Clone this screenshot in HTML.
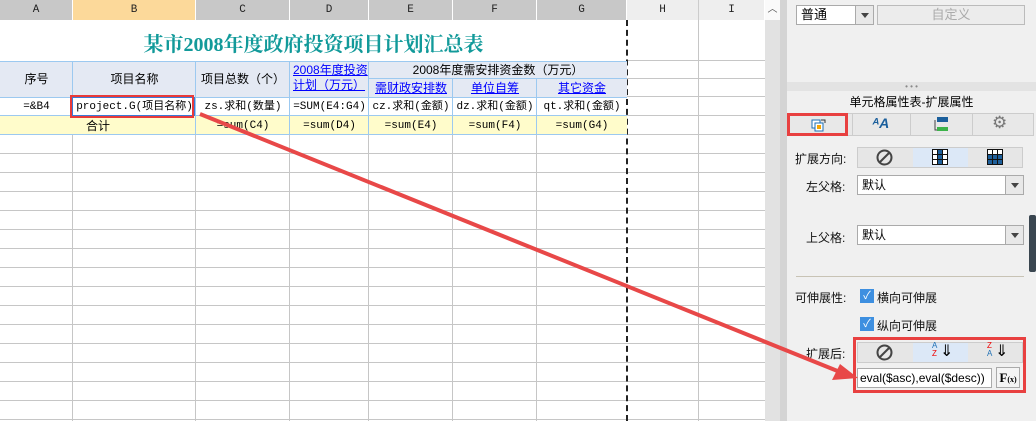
<!DOCTYPE html><html><head><meta charset="utf-8"><style>
*{margin:0;padding:0;box-sizing:border-box}
body{width:1036px;height:421px;overflow:hidden;background:#fff;font-family:"Liberation Sans","Noto Sans CJK SC",sans-serif;font-size:12px;position:relative}
.a{position:absolute}
.ch{top:0;height:20px;background:#c8c8c8;border-right:1px solid #fff;text-align:center;line-height:20px;font-family:"Liberation Mono","Noto Sans CJK SC",monospace;font-size:11px;color:#222}
.c{position:absolute;text-align:center;white-space:nowrap;overflow:hidden;font-family:"Liberation Mono","Noto Sans CJK SC",monospace;font-size:11px;line-height:14px;color:#000}
.u{color:#00f;text-decoration:underline;font-family:"Liberation Sans","Noto Sans CJK SC",sans-serif;font-size:12px}
.lab{position:absolute;font-size:12px;color:#111}
.dd{position:absolute;background:#fff;border:1px solid #aaa;height:20px;font-size:12px;line-height:18px;padding-left:4px}
.dd b{position:absolute;right:0;top:0;width:18px;height:18px;background:#e8e8e8;border-left:1px solid #aaa}
.dd b:after{content:"";position:absolute;left:5px;top:7px;border:4px solid transparent;border-top:5px solid #444}
</style></head><body>
<div class="a ch" style="left:0;width:73px">A</div>
<div class="a ch" style="left:73px;width:123px;background:#fcd99a">B</div>
<div class="a ch" style="left:196px;width:94px">C</div>
<div class="a ch" style="left:290px;width:79px">D</div>
<div class="a ch" style="left:369px;width:84px">E</div>
<div class="a ch" style="left:453px;width:84px">F</div>
<div class="a ch" style="left:537px;width:90px">G</div>
<div class="a ch" style="left:627px;width:72px;background:#eee;border-right:1px solid #ccc">H</div>
<div class="a ch" style="left:699px;width:66px;background:#eee">I</div>
<div class="a" style="left:627px;top:60px;width:138px;height:1px;background:#c6c6c6"></div>
<div class="a" style="left:627px;top:78px;width:138px;height:1px;background:#c6c6c6"></div>
<div class="a" style="left:627px;top:96px;width:138px;height:1px;background:#c6c6c6"></div>
<div class="a" style="left:627px;top:115px;width:138px;height:1px;background:#c6c6c6"></div>
<div class="a" style="left:0;top:134px;width:765px;height:1px;background:#c6c6c6"></div>
<div class="a" style="left:0;top:135px;width:765px;height:286px;background:repeating-linear-gradient(to bottom,transparent 0,transparent 18px,#c6c6c6 18px,#c6c6c6 19px)"></div>
<div class="a" style="left:72px;top:135px;width:1px;height:286px;background:#c6c6c6"></div>
<div class="a" style="left:195px;top:135px;width:1px;height:286px;background:#c6c6c6"></div>
<div class="a" style="left:289px;top:135px;width:1px;height:286px;background:#c6c6c6"></div>
<div class="a" style="left:368px;top:135px;width:1px;height:286px;background:#c6c6c6"></div>
<div class="a" style="left:452px;top:135px;width:1px;height:286px;background:#c6c6c6"></div>
<div class="a" style="left:536px;top:135px;width:1px;height:286px;background:#c6c6c6"></div>
<div class="a" style="left:698px;top:20px;width:1px;height:401px;background:#c6c6c6"></div>
<div class="a" style="left:626px;top:20px;width:0;height:401px;border-left:2px dashed #222"></div>
<div class="a" style="left:0;top:28px;width:627px;text-align:center;font-family:'Liberation Serif','Noto Serif CJK SC',serif;font-size:20px;font-weight:bold;color:#129a9a">某市2008年度政府投资项目计划汇总表</div>
<div class="a" style="left:0;top:61px;width:627px;height:36px;background:#e4e9f3;border-top:1px solid #9cc9f0"></div>
<div class="a" style="left:0;top:97px;width:627px;height:19px;border-top:1px solid #9cc9f0;border-bottom:1px solid #9cc9f0"></div>
<div class="a" style="left:0;top:116px;width:627px;height:19px;background:#fffccb;border-bottom:1px solid #9cc9f0"></div>
<div class="a" style="left:369px;top:78px;width:258px;height:1px;background:#9cc9f0"></div>
<div class="a" style="left:72px;top:61px;width:1px;height:55px;background:#9cc9f0"></div>
<div class="a" style="left:195px;top:61px;width:1px;height:74px;background:#9cc9f0"></div>
<div class="a" style="left:289px;top:61px;width:1px;height:74px;background:#9cc9f0"></div>
<div class="a" style="left:368px;top:61px;width:1px;height:74px;background:#9cc9f0"></div>
<div class="a" style="left:452px;top:78px;width:1px;height:57px;background:#9cc9f0"></div>
<div class="a" style="left:536px;top:78px;width:1px;height:57px;background:#9cc9f0"></div>
<div class="c" style="left:0;top:72px;width:73px;font-family:'Liberation Sans','Noto Sans CJK SC';font-size:12px">序号</div>
<div class="c" style="left:73px;top:72px;width:123px;font-family:'Liberation Sans','Noto Sans CJK SC';font-size:12px">项目名称</div>
<div class="c" style="left:196px;top:72px;width:94px;font-family:'Liberation Sans','Noto Sans CJK SC';font-size:12px">项目总数（个）</div>
<div class="c u" style="left:290px;top:63px;width:79px;line-height:15px;text-align:left;padding-left:3px">2008年度投资<br>计划（万元）</div>
<div class="c" style="left:369px;top:63px;width:258px;font-family:'Liberation Sans','Noto Sans CJK SC';font-size:12px">2008年度需安排资金数（万元）</div>
<div class="c u" style="left:369px;top:81px;width:84px">需财政安排数</div>
<div class="c u" style="left:453px;top:81px;width:84px">单位自筹</div>
<div class="c u" style="left:537px;top:81px;width:90px">其它资金</div>
<div class="c" style="left:0;top:100px;width:73px">=&amp;B4</div>
<div class="c" style="left:73px;top:100px;width:123px">project.G(项目名称)</div>
<div class="c" style="left:196px;top:100px;width:94px">zs.求和(数量)</div>
<div class="c" style="left:290px;top:100px;width:79px">=SUM(E4:G4)</div>
<div class="c" style="left:369px;top:100px;width:84px">cz.求和(金额)</div>
<div class="c" style="left:453px;top:100px;width:84px">dz.求和(金额)</div>
<div class="c" style="left:537px;top:100px;width:90px">qt.求和(金额)</div>
<div class="c" style="left:73px;top:119px;width:50px;font-family:'Liberation Sans','Noto Sans CJK SC';font-size:12px">合计</div>
<div class="c" style="left:196px;top:119px;width:94px">=sum(C4)</div>
<div class="c" style="left:290px;top:119px;width:79px">=sum(D4)</div>
<div class="c" style="left:369px;top:119px;width:84px">=sum(E4)</div>
<div class="c" style="left:453px;top:119px;width:84px">=sum(F4)</div>
<div class="c" style="left:537px;top:119px;width:90px">=sum(G4)</div>
<div class="a" style="left:72px;top:97px;width:123px;height:19px;border:1px solid #3a7ad8"></div>
<div class="a" style="left:70px;top:95px;width:124px;height:23px;border:2px solid #e83a3a"></div>
<div class="a" style="left:765px;top:0;width:15px;height:421px;background:#e2e2e2"></div>
<div class="a" style="left:765px;top:0;width:15px;height:20px;background:#fafafa;text-align:center;font-size:10px;line-height:20px;color:#555">︿</div>
<div class="a" style="left:780px;top:0;width:7px;height:421px;background:#d4d4d4"></div>
<div class="a" style="left:787px;top:0;width:249px;height:421px;background:#f0f0f0"></div>
<div class="dd" style="left:796px;top:5px;width:78px;font-size:13px">普通<b></b></div>
<div class="a" style="left:877px;top:5px;width:148px;height:20px;border:1px solid #bbb;background:#ececec;color:#aaa;text-align:center;line-height:18px;font-size:13px">自定义</div>
<div class="a" style="left:787px;top:82px;width:249px;height:9px;background:#e3e3e3;color:#888;font-size:8px;line-height:9px;text-align:center">• • •</div>
<div class="a" style="left:787px;top:93px;width:249px;text-align:center;font-size:12px">单元格属性表-扩展属性</div>
<div class="a" style="left:788px;top:113px;width:246px;height:23px;background:#e8e8e8;border:1px solid #ccc"></div>
<div class="a" style="left:852px;top:113px;width:1px;height:23px;background:#ccc"></div>
<div class="a" style="left:910px;top:113px;width:1px;height:23px;background:#ccc"></div>
<div class="a" style="left:972px;top:113px;width:1px;height:23px;background:#ccc"></div>
<svg class="a" style="left:811px;top:118px" width="16" height="14"><rect x="1" y="2" width="8" height="8" fill="#fff" stroke="#1e6fb4"/><rect x="4" y="5" width="8" height="8" fill="#fff" stroke="#1e6fb4"/><rect x="6" y="7" width="4" height="4" fill="#f5a500"/><path d="M10 2h4v3" stroke="#333" fill="none"/></svg>
<div class="a" style="left:872px;top:115px;font-weight:bold;font-style:italic;color:#1b5f9c;font-size:14px">ᴬA</div>
<svg class="a" style="left:933px;top:116px" width="16" height="18"><rect x="4" y="1" width="11" height="5" fill="#1b5f9c"/><rect x="4" y="11" width="11" height="4" fill="#3cb34a"/><path d="M2 4v10h2" stroke="#444" fill="none"/></svg>
<div class="a" style="left:992px;top:113px;font-size:17px;color:#777">⚙</div>
<div class="a" style="left:787px;top:113px;width:61px;height:23px;border:3px solid #e84040"></div>
<div class="lab" style="left:795px;top:150px">扩展方向:</div>
<div class="a" style="left:857px;top:147px;width:166px;height:21px;background:#e6e6e6;border:1px solid #ccc"></div>
<div class="a" style="left:913px;top:148px;width:55px;height:19px;background:#dce8f7"></div>
<svg class="a" style="left:876px;top:149px" width="17" height="17"><circle cx="8.5" cy="8.5" r="7" fill="none" stroke="#444" stroke-width="2"/><path d="M4 13L13 4" stroke="#444" stroke-width="2"/></svg>
<svg class="a" style="left:932px;top:149px" width="16" height="16"><rect x=".5" y=".5" width="15" height="15" fill="#fff" stroke="#111"/><rect x="5.5" y=".5" width="5" height="15" fill="#1e5f9a" stroke="#111"/><path d="M0 5.5h16M0 10.5h16" stroke="#111"/></svg>
<svg class="a" style="left:987px;top:149px" width="16" height="16"><rect x=".5" y=".5" width="15" height="15" fill="#fff" stroke="#111"/><rect x=".5" y="5.5" width="15" height="10" fill="#1e5f9a" stroke="#111"/><path d="M5.5 0v16M10.5 0v16M0 10.5h16" stroke="#111"/></svg>
<div class="lab" style="left:806px;top:178px">左父格:</div>
<div class="dd" style="left:857px;top:175px;width:167px">默认<b></b></div>
<div class="lab" style="left:806px;top:229px">上父格:</div>
<div class="dd" style="left:857px;top:225px;width:167px">默认<b></b></div>
<div class="a" style="left:1029px;top:215px;width:7px;height:57px;background:#3a4650;border-radius:2px"></div>
<div class="a" style="left:796px;top:276px;width:228px;height:1px;background:#c8c3b5"></div>
<div class="lab" style="left:795px;top:289px">可伸展性:</div>
<div class="a" style="left:860px;top:289px;width:14px;height:14px;background:#3d8fe0;color:#fff;font-size:11px;line-height:14px;text-align:center">✓</div>
<div class="lab" style="left:877px;top:289px">横向可伸展</div>
<div class="a" style="left:860px;top:317px;width:14px;height:14px;background:#3d8fe0;color:#fff;font-size:11px;line-height:14px;text-align:center">✓</div>
<div class="lab" style="left:877px;top:317px">纵向可伸展</div>
<div class="lab" style="left:806px;top:345px">扩展后:</div>
<div class="a" style="left:857px;top:342px;width:166px;height:21px;background:#e6e6e6;border:1px solid #ccc"></div>
<div class="a" style="left:913px;top:343px;width:55px;height:19px;background:#dce8f7"></div>
<svg class="a" style="left:876px;top:344px" width="17" height="17"><circle cx="8.5" cy="8.5" r="7" fill="none" stroke="#444" stroke-width="2"/><path d="M4 13L13 4" stroke="#444" stroke-width="2"/></svg>
<div class="a" style="left:932px;top:342px;font-size:8px;line-height:8px;color:#1e6fb4">A<br><span style="color:#e00">Z</span></div>
<div class="a" style="left:940px;top:342px;font-size:16px;line-height:19px">⇓</div>
<div class="a" style="left:987px;top:342px;font-size:8px;line-height:8px;color:#e00">Z<br><span style="color:#1e6fb4">A</span></div>
<div class="a" style="left:995px;top:342px;font-size:16px;line-height:19px">⇓</div>
<div class="a" style="left:857px;top:368px;width:135px;height:20px;background:#fff;border:1px solid #aaa;font-size:12px;line-height:18px;padding-left:2px;white-space:nowrap;overflow:hidden">eval($asc),eval($desc))</div>
<div class="a" style="left:996px;top:367px;width:24px;height:21px;border:1px solid #aaa;background:#f4f4f4;font-family:'Liberation Serif',serif;font-weight:bold;font-size:13px;text-align:center;line-height:19px">F<span style="font-size:8px">(x)</span></div>
<div class="a" style="left:853px;top:337px;width:173px;height:56px;border:3px solid #e84040"></div>
<svg class="a" style="left:0;top:0" width="1036" height="421"><line x1="200" y1="114" x2="840" y2="372" stroke="#e84848" stroke-width="4"/><polygon points="858,378 832,380 840,364" fill="#e84848"/></svg>
</body></html>
